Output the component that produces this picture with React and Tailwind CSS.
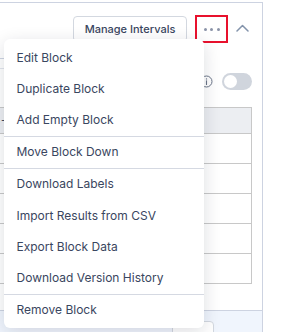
import React from 'react';

const groups = [
  ['Edit Block', 'Duplicate Block', 'Add Empty Block'],
  ['Move Block Down'],
  ['Download Labels', 'Import Results from CSV', 'Export Block Data', 'Download Version History'],
  ['Remove Block'],
];

function BlockMenu() {
  return (
    <div className="absolute left-[4px] top-[39px] w-[200px] rounded-[6px] bg-white pt-[3px] pb-[2px] shadow-[0_4px_18px_rgba(16,24,40,0.14)]">
      {groups.map((items, gi) => (
        <div key={gi} className={gi > 0 ? 'border-t border-[#d5d9e2]' : ''}>
          {items.map((label) => (
            <div key={label} className="flex h-[31.2px] items-center px-[12.5px] text-[12px] text-[#3a4660]">
              {label}
            </div>
          ))}
        </div>
      ))}
    </div>
  );
}

function App() {
  return (
    <div className="relative h-[332px] w-[288px] overflow-hidden bg-white font-['Inter',sans-serif]">
      <div className="ml-[-20px] mt-[2px] flex h-[340px] w-[283px] flex-col border border-[#cdd3e1] bg-white">
        <div className="flex h-[313px] flex-col">
          <div className="flex items-start pt-[13px] pl-[92px]">
            <button className="flex h-[26px] w-[114px] items-center justify-center rounded-[4px] border border-[#d3d8e0] bg-white text-[11px] font-medium text-[#3a4660]">
              Manage Intervals
            </button>
            <div className="ml-[8px] flex h-[28px] w-[33px] items-center justify-center gap-[3.5px] border-2 border-[#e8112d] -mt-[1px]">
              <span className="h-[3px] w-[3px] rounded-full bg-[#8a93a8]" />
              <span className="h-[3px] w-[3px] rounded-full bg-[#8a93a8]" />
              <span className="h-[3px] w-[3px] rounded-full bg-[#8a93a8]" />
            </div>
            <svg className="ml-[8px] mt-[8px]" width="13" height="8" viewBox="0 0 13 8" fill="none">
              <path d="M1 7L6.5 1.5L12 7" stroke="#8393ab" strokeWidth="1.5" strokeLinecap="round" strokeLinejoin="round" />
            </svg>
          </div>
          <div className="mt-[15px] w-[170px] border-t border-[#cdd3e1]" />
          <div className="mt-[9px] w-[170px] border-t border-[#e2e5ec]" />
          <div className="mt-[4px] flex items-center justify-end pr-[10px]">
            <svg width="13" height="13" viewBox="0 0 13 13" fill="none">
              <circle cx="6.5" cy="6.5" r="5.5" stroke="#6b7588" strokeWidth="1" />
              <path d="M6.5 5.8V9.5" stroke="#6b7588" strokeWidth="1.1" strokeLinecap="round" />
              <circle cx="6.5" cy="3.9" r="0.7" fill="#6b7588" />
            </svg>
            <div className="ml-[9px] flex h-[17px] w-[30px] items-center rounded-full bg-[#d0d5dd] pl-[2px]">
              <span className="h-[13px] w-[13px] rounded-full bg-white" />
            </div>
          </div>
          <div className="mt-[17px] mr-[10px] border border-[#c8c8c8]">
            <div className="flex h-[25px] items-center bg-[#eceef2] pl-[19px] text-[11px] text-[#36425a]">-</div>
            {[0, 1, 2, 3, 4].map((i) => (
              <div key={i} className="h-[30px] border-t border-[#c8c8c8]" />
            ))}
          </div>
        </div>
        <div className="flex flex-1 border-t border-[#cdd3e1] bg-[#f0f5fd] pl-[191px] pt-[10px]">
          <div className="h-[20px] w-[42px] rounded-[4px] border border-[#d3d8e0] bg-white" />
        </div>
      </div>
      <BlockMenu />
    </div>
  );
}

export default App;
